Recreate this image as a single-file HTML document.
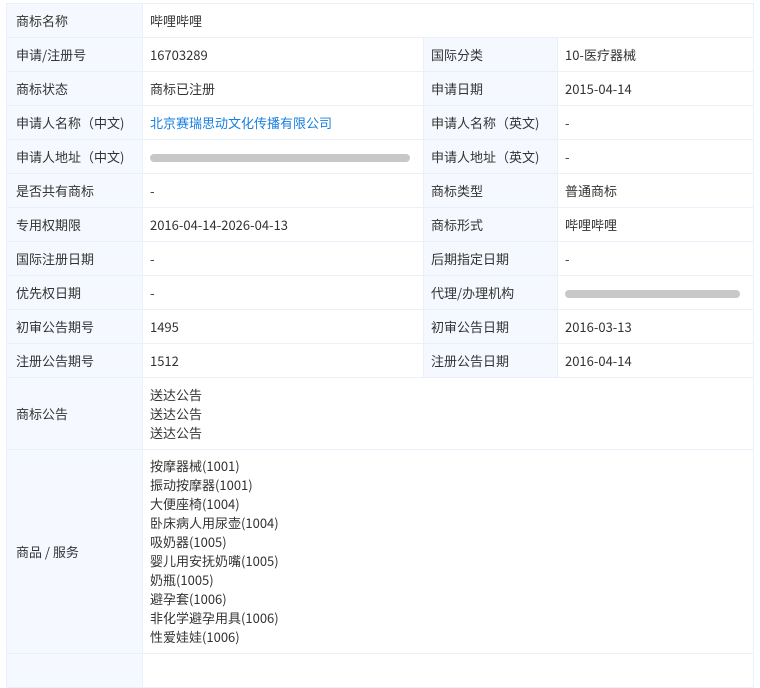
<!DOCTYPE html>
<html><head><meta charset="utf-8"><style>
body{margin:0;background:#fff;width:760px;height:658px;overflow:hidden;font-family:"Noto Sans CJK SC","Liberation Sans",sans-serif;font-size:13px;color:#333}
table{position:absolute;left:6px;top:3px;border-collapse:collapse;table-layout:fixed;width:747px}
td{border:1px solid #e8f0fa;height:33px;padding:0 0 0 7px;vertical-align:middle;white-space:nowrap;overflow:hidden;line-height:19px}
td.l{background:#f5f9ff}
td.f{padding-left:9px}
a{color:#1a7fe0;text-decoration:none}
.blur{display:inline-block;height:8px;background:#c8c8c8;border-radius:4px;vertical-align:middle}
.ls{line-height:19px;padding-top:5px;padding-bottom:6px}
</style></head><body>
<table>
<col style="width:136px"><col style="width:281px"><col style="width:134px"><col style="width:196px">
<tr><td class="l f">商标名称</td><td colspan="3">哔哩哔哩</td></tr>
<tr><td class="l f">申请/注册号</td><td>16703289</td><td class="l">国际分类</td><td>10-医疗器械</td></tr>
<tr><td class="l f">商标状态</td><td>商标已注册</td><td class="l">申请日期</td><td>2015-04-14</td></tr>
<tr><td class="l f">申请人名称（中文)</td><td><a>北京赛瑞思动文化传播有限公司</a></td><td class="l">申请人名称（英文)</td><td>-</td></tr>
<tr><td class="l f">申请人地址（中文)</td><td><span class="blur" style="width:260px"></span></td><td class="l">申请人地址（英文)</td><td>-</td></tr>
<tr><td class="l f">是否共有商标</td><td>-</td><td class="l">商标类型</td><td>普通商标</td></tr>
<tr><td class="l f">专用权期限</td><td>2016-04-14-2026-04-13</td><td class="l">商标形式</td><td>哔哩哔哩</td></tr>
<tr><td class="l f">国际注册日期</td><td>-</td><td class="l">后期指定日期</td><td>-</td></tr>
<tr><td class="l f">优先权日期</td><td>-</td><td class="l">代理/办理机构</td><td><span class="blur" style="width:175px"></span></td></tr>
<tr><td class="l f">初审公告期号</td><td>1495</td><td class="l">初审公告日期</td><td>2016-03-13</td></tr>
<tr><td class="l f">注册公告期号</td><td>1512</td><td class="l">注册公告日期</td><td>2016-04-14</td></tr>
<tr><td class="l f" style="height:71px">商标公告</td><td colspan="3" class="ls">送达公告<br>送达公告<br>送达公告</td></tr>
<tr><td class="l f" style="height:203px">商品 / 服务</td><td colspan="3" class="ls">按摩器械(1001)<br>振动按摩器(1001)<br>大便座椅(1004)<br>卧床病人用尿壶(1004)<br>吸奶器(1005)<br>婴儿用安抚奶嘴(1005)<br>奶瓶(1005)<br>避孕套(1006)<br>非化学避孕用具(1006)<br>性爱娃娃(1006)</td></tr>
<tr><td class="l f"></td><td colspan="3"></td></tr>
</table>
</body></html>
